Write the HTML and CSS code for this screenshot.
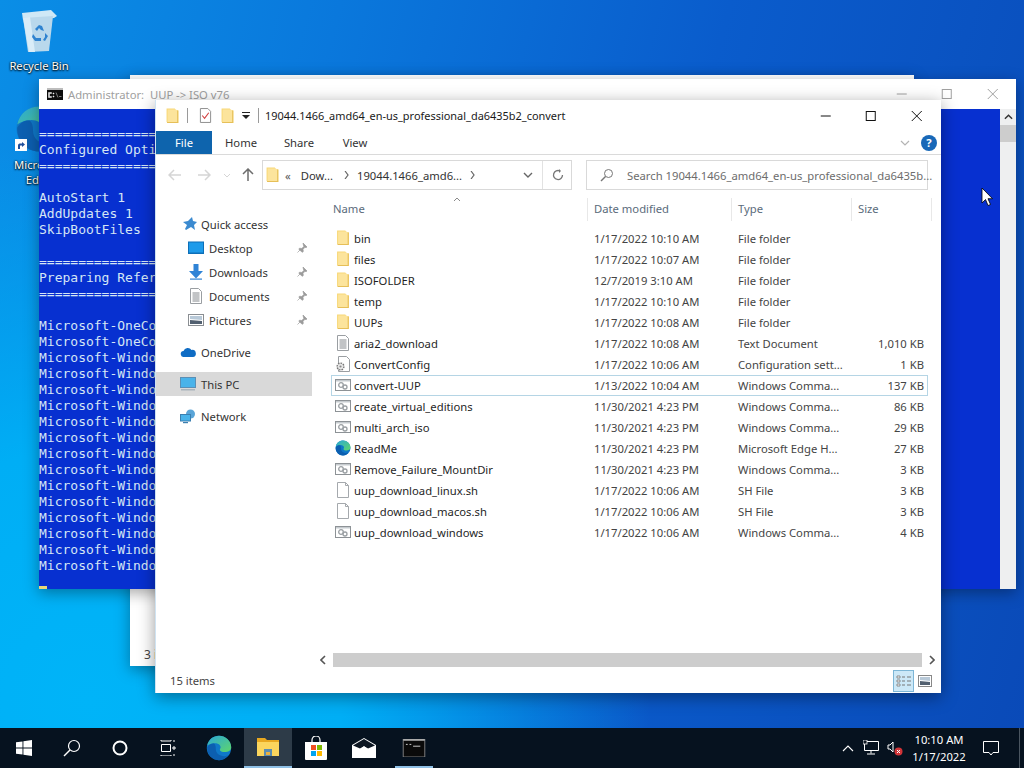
FILE: index.html
```html
<!DOCTYPE html>
<html lang="en">
<head>
<meta charset="utf-8">
<title>Windows 10 desktop</title>
<link rel="stylesheet" href="styles.css">
</head>
<body>
<svg class="defs" width="0" height="0" aria-hidden="true">
  <defs>
    <linearGradient id="edgeTop" x1="0" y1="0" x2="1" y2="1">
      <stop offset="0" stop-color="#2ba8d8"/>
      <stop offset="1" stop-color="#5ed66a"/>
    </linearGradient>
    <symbol id="folder" viewBox="1.5 .5 12.5 15.500">
      <path d="M2 1h8l1 1.500 2.500.5V15H3.500L2 14z" fill="#f8d878"/>
      <path d="M3 2h8l1.500 1V14H3z" fill="#fce49c"/>
      <path d="M12.800 3v11.600H2.500" fill="none" stroke="#e6bf58"/>
    </symbol>
    <symbol id="bat" viewBox="0 0 16 16">
      <rect x=".5" y="2.500" width="15" height="11" fill="#fff" stroke="#8d9296"/>
      <rect x="1" y="3" width="14" height="1.500" fill="#c6cbcf"/>
      <circle cx="6" cy="8" r="2.300" fill="none" stroke="#9a9fa3" stroke-width="1.300"/>
      <circle cx="10" cy="10" r="2" fill="none" stroke="#9a9fa3" stroke-width="1.300"/>
    </symbol>
    <symbol id="txt" viewBox="0 0 16 16">
      <path d="M2.500.5h8l3 3v12h-11z" fill="#fff" stroke="#9a9ea2"/>
      <path d="M4.500 5h7M4.500 7h7M4.500 9h7M4.500 11h7M4.500 13h7" stroke="#85898d"/>
    </symbol>
    <symbol id="blank" viewBox="0 0 16 16">
      <path d="M2.500.5h8l3 3v12h-11z" fill="#fff" stroke="#a5a9ad"/>
      <path d="M10.500.5v3h3" fill="none" stroke="#a5a9ad"/>
    </symbol>
    <symbol id="cfg" viewBox="0 0 16 16">
      <path d="M3.500.5h8l3 3v12h-11z" fill="#fff" stroke="#9a9ea2"/>
      <circle cx="5.500" cy="10.500" r="3.400" fill="#e8e8e8" stroke="#777" stroke-width="1.400" stroke-dasharray="1.600 1"/>
      <circle cx="5.500" cy="10.500" r="1.100" fill="#888"/>
    </symbol>
    <symbol id="edge" viewBox="0 0 32 32">
      <circle cx="16" cy="16" r="15" fill="#0f78c8"/>
      <path d="M1.500 13C3 5.500 9 1 16 1c8 0 15 6 15 14 0 4-4 6-8 6-3 0-6-1-6-3 0-1 1-1.500 1-3 0-3-3-5-7-5-4.500 0-8.500 2-9.500 3z" fill="url(#edgeTop)"/>
      <path d="M12 17c0 6 5 9 10 9 2 0 3.500-.5 5-1.500C24.500 28.500 20.500 31 16 31 8 31 1 24 1.500 15 4 11 8 10 10 10.500 11.500 12 12 14 12 17z" fill="#0c5fb0"/>
    </symbol>
    <symbol id="pin" viewBox="0 0 12 12">
      <path d="M7 1l4 4-1 .6-1-.3-2 2 .3 2.200-1 .8L2.800 7.200l.8-1 2.200.3 2-2-.3-1zM4.500 7.500L1.500 10.500" fill="#9b9b9b" stroke="#9b9b9b" stroke-width=".7"/>
    </symbol>
  </defs>
</svg>

<main class="desktop">
  <div class="desk-icon recycle">
    <svg class="desk-glyph" viewBox="0 0 40 44" width="40" height="44" aria-hidden="true">
      <path d="M3 4l29-3 6 6-3 2L4 11z" fill="#cfe8f6"/>
      <path d="M4 9l30-2-4 35-21 1z" fill="#b9d8ec"/>
      <path d="M4 9l6 34h6L11 8z" fill="#d9ecf8"/>
      <path d="M16 20l4-4 3 1 2 5-3-1-2-2-2 3zM14 25l3 4h5v3h-6l-3-4zM26 24l3 3-3 5-2-1 2-3z" fill="#2f83d0"/>
    </svg>
    <span class="desk-label">Recycle Bin</span>
  </div>
  <div class="desk-icon edge-short">
    <span class="edge-wrap">
      <svg viewBox="0 0 32 32" width="48" height="48" aria-hidden="true"><use href="#edge"/></svg>
      <svg class="shortcut" viewBox="0 0 12 12" width="12" height="12" aria-hidden="true">
        <rect width="12" height="12" fill="#fff"/>
        <path d="M3 10V6.500C3 5 4 4.500 5.500 4.500H7V3l3 2.500L7 8V6.500H5.500C5 6.500 5 7 5 7.500V10z" fill="#1f4f9c"/>
      </svg>
    </span>
    <span class="desk-label">Microsoft Edge</span>
  </div>

  <section class="win back-win">
    <div class="back-spacer"></div>
    <div class="back-status">3 items</div>
  </section>

  <section class="win console">
    <header class="console-title">
      <svg class="console-icon" viewBox="0 0 16 12" width="16" height="12" aria-hidden="true">
        <rect width="16" height="12" fill="#0c0c0c"/>
        <rect width="16" height="2" fill="#bdbdbd"/>
        <path d="M2.500 4.500h2v1h-2v3h2v1h-3v-5zM6 5h1v1H6zM6 8h1v1H6zM9 4.500l2 5M12 8.500h2.500" stroke="#eee" fill="#eee" stroke-width=".5"/>
      </svg>
      <span class="console-name">Administrator:  UUP -&gt; ISO v76</span>
      <span class="caption-group dim">
        <svg viewBox="0 0 10 10" width="10" height="10" aria-hidden="true"><path d="M0 5h10" stroke="currentColor"/></svg>
        <svg viewBox="0 0 10 10" width="10" height="10" aria-hidden="true"><rect x=".5" y=".5" width="9" height="9" fill="none" stroke="currentColor"/></svg>
        <svg viewBox="0 0 10 10" width="10" height="10" aria-hidden="true"><path d="M0 0l10 10M10 0L0 10" stroke="currentColor"/></svg>
      </span>
    </header>
    <div class="console-body">
      <pre class="console-text">
===============
Configured Opti
===============

AutoStart 1
AddUpdates 1
SkipBootFiles

===============
Preparing Refer
===============

Microsoft-OneCo
Microsoft-OneCo
Microsoft-Windo
Microsoft-Windo
Microsoft-Windo
Microsoft-Windo
Microsoft-Windo
Microsoft-Windo
Microsoft-Windo
Microsoft-Windo
Microsoft-Windo
Microsoft-Windo
Microsoft-Windo
Microsoft-Windo
Microsoft-Windo
Microsoft-Windo</pre>
      <span class="cursor"></span>
      <div class="console-scroll">
        <svg viewBox="0 0 10 6" width="9" height="6" aria-hidden="true"><path d="M1 5l4-4 4 4" fill="none" stroke="#333" stroke-width="1.600"/></svg>
        <span class="console-thumb"></span>
      </div>
    </div>
  </section>

  <section class="win explorer">
    <header class="title-row">
      <svg class="qa-folder" width="13" height="16" aria-hidden="true"><use href="#folder"/></svg>
      <span class="qa-sep"></span>
      <svg class="qa-check" viewBox="0 0 14 16" width="13" height="15" aria-hidden="true">
        <path d="M1.500.5h8l3 3v12h-11z" fill="#fff" stroke="#888"/>
        <path d="M3.500 8l2.500 3 4.500-6" fill="none" stroke="#d24040" stroke-width="1.200"/>
      </svg>
      <svg class="qa-folder2" width="13" height="16" aria-hidden="true"><use href="#folder"/></svg>
      <svg class="qa-drop" viewBox="0 0 8 7" width="8" height="7" aria-hidden="true"><path d="M0 0h8v1H0zM0 3h8L4 7z" fill="#222"/></svg>
      <span class="qa-sep second"></span>
      <span class="win-title">19044.1466_amd64_en-us_professional_da6435b2_convert</span>
      <span class="caption-group main">
        <svg viewBox="0 0 10 10" width="10" height="10" aria-hidden="true"><path d="M0 5h10" stroke="currentColor"/></svg>
        <svg viewBox="0 0 10 10" width="10" height="10" aria-hidden="true"><rect x=".5" y=".5" width="9" height="9" fill="none" stroke="currentColor"/></svg>
        <svg viewBox="0 0 10 10" width="10" height="10" aria-hidden="true"><path d="M0 0l10 10M10 0L0 10" stroke="currentColor"/></svg>
      </span>
    </header>

    <nav class="ribbon">
      <span class="tab file-tab">File</span>
      <span class="tab home-tab">Home</span>
      <span class="tab share-tab">Share</span>
      <span class="tab view-tab">View</span>
      <svg class="ribbon-chev" viewBox="0 0 10 6" width="10" height="6" aria-hidden="true"><path d="M1 1l4 4 4-4" fill="none" stroke="#b4b4b4" stroke-width="1.200"/></svg>
      <span class="help">?</span>
    </nav>

    <div class="nav-row">
      <svg class="nav-arrow back" viewBox="0 0 14 12" width="14" height="12" aria-hidden="true"><path d="M6 1L1 6l5 5M1 6h12" fill="none" stroke="#d5d5d5" stroke-width="1.500"/></svg>
      <svg class="nav-arrow fwd" viewBox="0 0 14 12" width="14" height="12" aria-hidden="true"><path d="M8 1l5 5-5 5M13 6H1" fill="none" stroke="#d5d5d5" stroke-width="1.500"/></svg>
      <svg class="nav-arrow recent" viewBox="0 0 8 5" width="8" height="5" aria-hidden="true"><path d="M1 1l3 3 3-3" fill="none" stroke="#d5d5d5"/></svg>
      <svg class="nav-arrow up" viewBox="0 0 12 14" width="12" height="14" aria-hidden="true"><path d="M1 6l5-5 5 5M6 1v12" fill="none" stroke="#6d6d6d" stroke-width="1.500"/></svg>
      <div class="address">
        <svg class="addr-folder" width="13" height="16" aria-hidden="true"><use href="#folder"/></svg>
        <span class="addr-quote">«</span>
        <span class="addr-dow">Dow...</span>
        <svg class="crumb" viewBox="0 0 5 8" width="5" height="8" aria-hidden="true"><path d="M1 0l3 4-3 4" fill="none" stroke="#666" stroke-width="1.200"/></svg>
        <span class="addr-path">19044.1466_amd6...</span>
        <svg class="crumb second" viewBox="0 0 5 8" width="5" height="8" aria-hidden="true"><path d="M1 0l3 4-3 4" fill="none" stroke="#666" stroke-width="1.200"/></svg>
        <svg class="addr-drop" viewBox="0 0 10 6" width="10" height="6" aria-hidden="true"><path d="M1 1l4 4 4-4" fill="none" stroke="#666" stroke-width="1.400"/></svg>
        <span class="addr-sep"></span>
        <svg class="refresh" viewBox="0 0 12 12" width="12" height="12" aria-hidden="true"><path d="M10.500 6A4.500 4.500 0 1 1 8 2" fill="none" stroke="#777" stroke-width="1.300"/><path d="M7 0l2 2-2 2z" fill="#777"/></svg>
      </div>
      <div class="search">
        <svg class="search-icon" viewBox="0 0 14 14" width="14" height="14" aria-hidden="true"><circle cx="8.500" cy="5.500" r="4" fill="none" stroke="#777"/><path d="M5.500 8.500L1 13" stroke="#777" stroke-width="1.500"/></svg>
        <span class="search-text">Search 19044.1466_amd64_en-us_professional_da6435b...</span>
      </div>
    </div>

    <div class="body-row">
      <aside class="side">
        <div class="side-item top"><svg viewBox="0 0 16 16" width="16" height="16" aria-hidden="true"><path d="M10 1l1 4 4 1-3 3 1 5-4-3-5 3-1-1 2-4-4-3 5-1z" fill="#3b8ad0"/></svg><span>Quick access</span></div>
        <div class="side-item sub"><svg viewBox="0 0 16 14" width="16" height="14" aria-hidden="true"><rect x=".5" y="1" width="15" height="11" fill="#1e9bea" stroke="#0d6fb8"/><rect y="12" width="16" height="1" fill="#0d6fb8"/></svg><span>Desktop</span><svg class="pin" width="12" height="12" aria-hidden="true"><use href="#pin"/></svg></div>
        <div class="side-item sub"><svg viewBox="0 0 16 16" width="16" height="16" aria-hidden="true"><path d="M5.500 0h5v7H15l-7 7.500L1 7h4.500z" fill="#2f83d6"/><rect x="2" y="14.500" width="12" height="1.200" fill="#2f83d6"/></svg><span>Downloads</span><svg class="pin" width="12" height="12" aria-hidden="true"><use href="#pin"/></svg></div>
        <div class="side-item sub"><svg viewBox="0 0 16 16" width="16" height="16" aria-hidden="true"><use href="#txt"/></svg><span>Documents</span><svg class="pin" width="12" height="12" aria-hidden="true"><use href="#pin"/></svg></div>
        <div class="side-item sub"><svg viewBox="0 0 16 14" width="16" height="14" aria-hidden="true"><rect x=".5" y="1.500" width="15" height="11" fill="#fff" stroke="#8a8e92"/><path d="M2 3h12v4L2 6z" fill="#b8c9d8"/><path d="M2 7l12 1v3H2z" fill="#526070"/></svg><span>Pictures</span><svg class="pin" width="12" height="12" aria-hidden="true"><use href="#pin"/></svg></div>
        <div class="side-item group"><svg viewBox="0 0 16 10" width="16" height="10" aria-hidden="true"><path d="M4 10a3 3 0 0 1-.5-6A4.500 4.500 0 0 1 11.500 3 3.500 3.500 0 0 1 13 10z" fill="#0f6cc4"/></svg><span>OneDrive</span></div>
        <div class="side-item group current"><svg viewBox="0 0 16 14" width="16" height="14" aria-hidden="true"><rect x=".5" y=".5" width="15" height="10" fill="#49b3ea" stroke="#5b8fb5"/><rect x="1" y="12" width="14" height="1.500" fill="#a9b4bc"/></svg><span>This PC</span></div>
        <div class="side-item group"><svg viewBox="0 0 16 15" width="16" height="15" aria-hidden="true"><circle cx="10.500" cy="5" r="4.500" fill="#5aa5d8"/><rect x=".5" y="5.500" width="10" height="6.500" fill="#49b3ea" stroke="#3b7fb0"/><rect x="3" y="13" width="5" height="1.200" fill="#3b7fb0"/></svg><span>Network</span></div>
      </aside>

      <div class="content">
        <div class="sort-mark"><svg viewBox="0 0 8 5" width="8" height="5" aria-hidden="true"><path d="M1 4l3-3 3 3" fill="none" stroke="#8a8a8a"/></svg></div>
        <div class="columns">
          <span class="col">Name</span>
          <span class="col">Date modified</span>
          <span class="col">Type</span>
          <span class="col">Size</span>
        </div>
        <div class="rows">
          <div class="row"><svg width="16" height="16" aria-hidden="true"><use href="#folder"/></svg><span class="fname">bin</span><span>1/17/2022 10:10 AM</span><span>File folder</span><span class="size"></span></div>
          <div class="row"><svg width="16" height="16" aria-hidden="true"><use href="#folder"/></svg><span class="fname">files</span><span>1/17/2022 10:07 AM</span><span>File folder</span><span class="size"></span></div>
          <div class="row"><svg width="16" height="16" aria-hidden="true"><use href="#folder"/></svg><span class="fname">ISOFOLDER</span><span>12/7/2019 3:10 AM</span><span>File folder</span><span class="size"></span></div>
          <div class="row"><svg width="16" height="16" aria-hidden="true"><use href="#folder"/></svg><span class="fname">temp</span><span>1/17/2022 10:10 AM</span><span>File folder</span><span class="size"></span></div>
          <div class="row"><svg width="16" height="16" aria-hidden="true"><use href="#folder"/></svg><span class="fname">UUPs</span><span>1/17/2022 10:08 AM</span><span>File folder</span><span class="size"></span></div>
          <div class="row"><svg width="16" height="16" aria-hidden="true"><use href="#txt"/></svg><span class="fname">aria2_download</span><span>1/17/2022 10:08 AM</span><span>Text Document</span><span class="size">1,010 KB</span></div>
          <div class="row"><svg width="16" height="16" aria-hidden="true"><use href="#cfg"/></svg><span class="fname">ConvertConfig</span><span>1/17/2022 10:06 AM</span><span>Configuration sett...</span><span class="size">1 KB</span></div>
          <div class="row focused"><svg width="16" height="16" aria-hidden="true"><use href="#bat"/></svg><span class="fname">convert-UUP</span><span>1/13/2022 10:04 AM</span><span>Windows Comma...</span><span class="size">137 KB</span></div>
          <div class="row"><svg width="16" height="16" aria-hidden="true"><use href="#bat"/></svg><span class="fname">create_virtual_editions</span><span>11/30/2021 4:23 PM</span><span>Windows Comma...</span><span class="size">86 KB</span></div>
          <div class="row"><svg width="16" height="16" aria-hidden="true"><use href="#bat"/></svg><span class="fname">multi_arch_iso</span><span>11/30/2021 4:23 PM</span><span>Windows Comma...</span><span class="size">29 KB</span></div>
          <div class="row"><svg viewBox="0 0 32 32" width="16" height="16" aria-hidden="true"><use href="#edge"/></svg><span class="fname">ReadMe</span><span>11/30/2021 4:23 PM</span><span>Microsoft Edge H...</span><span class="size">27 KB</span></div>
          <div class="row"><svg width="16" height="16" aria-hidden="true"><use href="#bat"/></svg><span class="fname">Remove_Failure_MountDir</span><span>11/30/2021 4:23 PM</span><span>Windows Comma...</span><span class="size">3 KB</span></div>
          <div class="row"><svg width="16" height="16" aria-hidden="true"><use href="#blank"/></svg><span class="fname">uup_download_linux.sh</span><span>1/17/2022 10:06 AM</span><span>SH File</span><span class="size">3 KB</span></div>
          <div class="row"><svg width="16" height="16" aria-hidden="true"><use href="#blank"/></svg><span class="fname">uup_download_macos.sh</span><span>1/17/2022 10:06 AM</span><span>SH File</span><span class="size">3 KB</span></div>
          <div class="row"><svg width="16" height="16" aria-hidden="true"><use href="#bat"/></svg><span class="fname">uup_download_windows</span><span>1/17/2022 10:06 AM</span><span>Windows Comma...</span><span class="size">4 KB</span></div>
        </div>
        <div class="hscroll">
          <svg viewBox="0 0 6 10" width="6" height="10" aria-hidden="true"><path d="M5 1L1 5l4 4" fill="none" stroke="#555" stroke-width="1.600"/></svg>
          <span class="hthumb"></span>
          <svg viewBox="0 0 6 10" width="6" height="10" aria-hidden="true"><path d="M1 1l4 4-4 4" fill="none" stroke="#555" stroke-width="1.600"/></svg>
        </div>
      </div>
    </div>

    <footer class="status">
      <span class="count">15 items</span>
      <span class="view-btn active">
        <svg viewBox="0 0 16 12" width="16" height="12" aria-hidden="true"><path d="M1 1h3v2H1zM1 5h3v2H1zM1 9h3v2H1z" fill="#fff" stroke="#777" stroke-width=".8"/><path d="M6 2h3M11 2h4M6 6h3M11 6h4M6 10h3M11 10h4" stroke="#777"/></svg>
      </span>
      <span class="view-btn large">
        <svg viewBox="0 0 14 12" width="14" height="12" aria-hidden="true"><rect x=".5" y=".5" width="13" height="11" fill="#fff" stroke="#888"/><path d="M2 2h10v4L2 5z" fill="#b8c9d8"/><path d="M2 6l10 1v3H2z" fill="#526070"/></svg>
      </span>
    </footer>
  </section>

  <svg class="pointer" viewBox="0 0 12 20" width="12" height="20" aria-hidden="true"><path d="M1 1v15l3.500-3.500 2.500 6 2.500-1-2.500-5.800H11.500z" fill="#fff" stroke="#000" stroke-width=".8"/></svg>
</main>

<footer class="taskbar">
  <span class="tb start"><svg viewBox="0 0 16 16" width="16" height="16" aria-hidden="true"><path d="M0 2.300l6.500-.9v6.200H0zM7.400 1.300L16 0v7.600H7.400zM0 8.400h6.500v6.200L0 13.700zM7.400 8.400H16V16l-8.600-1.300z" fill="#fff"/></svg></span>
  <span class="tb"><svg viewBox="0 0 18 18" width="18" height="18" aria-hidden="true"><circle cx="11" cy="7" r="5.500" fill="none" stroke="#fff" stroke-width="1.200"/><path d="M7 11l-6 6" stroke="#fff" stroke-width="1.400"/></svg></span>
  <span class="tb"><svg viewBox="0 0 16 16" width="16" height="16" aria-hidden="true"><circle cx="8" cy="8" r="6.500" fill="none" stroke="#fff" stroke-width="2"/></svg></span>
  <span class="tb"><svg viewBox="0 0 16 16" width="16" height="16" aria-hidden="true"><path d="M1 0v1h10V0M1 15v1h10v-1M1.500 4.500h9v7h-9zM13 1h2M13 7h2v2h-2zM13 15h2" fill="none" stroke="#fff"/></svg></span>
  <span class="tb edge-tb"><svg viewBox="0 0 32 32" width="26" height="26" aria-hidden="true"><use href="#edge"/></svg></span>
  <span class="tb files-tb"><svg viewBox="0 0 24 20" width="24" height="20" aria-hidden="true"><path d="M1 1h8l2 2h12v15H1z" fill="#e8a820"/><path d="M1 5h22v14H1z" fill="#fbd55d"/><rect x="8" y="12" width="8" height="7" fill="#5b8cb0"/><rect x="10" y="15" width="4" height="3" fill="#e8b040"/></svg></span>
  <span class="tb"><svg viewBox="0 0 24 24" width="24" height="24" aria-hidden="true"><path d="M8 6V4a4 4 0 0 1 8 0v2" fill="none" stroke="#fff" stroke-width="1.200"/><path d="M1 6h22v17a1 1 0 0 1-1 1H2a1 1 0 0 1-1-1z" fill="#fff"/><rect x="7" y="9" width="5" height="5" fill="#f25022"/><rect x="13" y="9" width="5" height="5" fill="#7fba00"/><rect x="7" y="15" width="5" height="5" fill="#00a4ef"/><rect x="13" y="15" width="5" height="5" fill="#ffb900"/></svg></span>
  <span class="tb"><svg viewBox="0 0 24 20" width="24" height="20" aria-hidden="true"><path d="M0 7l12-7 12 7v13H0z" fill="#fff"/><path d="M1 7.500l11-6.500 11 6.500-7 3-4-2-4 2z" fill="#0c1622"/><path d="M12 8l4 3-4 2-4-2z" fill="#fff"/></svg></span>
  <span class="tb cmd-tb"><svg viewBox="0 0 24 20" width="24" height="18" aria-hidden="true"><rect width="24" height="20" fill="#0a0a0a" stroke="#888"/><rect width="24" height="2" fill="#aaa"/><path d="M3 6h2M7 6h2M11 8h8" stroke="#ddd"/></svg></span>
  <div class="tray">
    <svg class="tray-chev" viewBox="0 0 12 7" width="12" height="7" aria-hidden="true"><path d="M1 6l5-5 5 5" fill="none" stroke="#fff" stroke-width="1.100"/></svg>
    <svg class="tray-net" viewBox="0 0 16 16" width="16" height="16" aria-hidden="true"><path d="M1.500 1.500h14v9H1.500zM8 10.500v3M4 14h8" fill="none" stroke="#fff"/><rect x="0" y="0" width="4" height="4" fill="#0c1622" stroke="#fff" stroke-width=".8"/></svg>
    <svg class="tray-vol" viewBox="0 0 16 16" width="16" height="16" aria-hidden="true"><path d="M1 5h2l3-3v10L3 9H1z" fill="none" stroke="#fff"/><circle cx="11.500" cy="11.500" r="4" fill="#d13438"/><path d="M10 10l3 3M13 10l-3 3" stroke="#fff"/></svg>
    <div class="clock"><span>10:10 AM</span><span>1/17/2022</span></div>
    <svg class="tray-note" viewBox="0 0 16 16" width="16" height="16" aria-hidden="true"><path d="M.5 1.500h15v11H10L8 15l-2-2.500H.5z" fill="none" stroke="#fff"/></svg>
    <span class="show-desktop"></span>
  </div>
</footer>
</body>
</html>
```
FILE: styles.css
```css
* { box-sizing: border-box; }
html, body { margin: 0; height: 100%; }
body {
  width: 1024px;
  height: 768px;
  overflow: hidden;
  display: flex;
  flex-direction: column;
  font-family: "Noto Sans", "Open Sans", sans-serif;
  font-size: 11.25px;
  color: #333;
  background: #0a5fd0;
}
.defs { position: absolute; }

.desktop {
  position: relative;
  flex: 1;
  background:
    radial-gradient(560px 560px at 90px 700px, #00b4f8 0%, #00aef5 45%, rgba(0,160,240,0) 100%),
    linear-gradient(105deg, #0a8ee6 0%, #0a78dc 28%, #0a5ccc 60%, #0a4ab8 100%);
}

.desk-icon {
  position: absolute;
  display: flex;
  flex-direction: column;
  align-items: center;
  width: 76px;
  color: #fff;
  text-shadow: 0 1px 2px #000, 0 0 2px #000;
}
.recycle { left: 1px; top: 9px; }
.edge-short { left: 1px; top: 105px; }
.desk-label { margin-top: 5px; line-height: 15px; text-align: center; }
.edge-wrap { position: relative; height: 48px; display: block; }
.shortcut { position: absolute; left: 0; bottom: 2px; }
.edge-short .desk-label { width: 60px; margin-top: 4px; }

.win { position: absolute; display: flex; flex-direction: column; background: #fff; }
.back-win {
  left: 130px; top: 75px; width: 784px; height: 591px;
  box-shadow: 0 4px 14px rgba(0,0,0,.35);
}
.back-spacer { flex: 1; }
.back-status { padding-left: 14px; height: 22px; line-height: 22px; color: #444; font-size: 12px; }

.console {
  left: 39px; top: 79px; width: 977px; height: 510px;
  box-shadow: 0 4px 14px rgba(0,0,0,.35);
}
.console-title {
  height: 30px;
  display: flex;
  align-items: center;
  padding-left: 8px;
  flex: none;
  background: #fff;
}
.console-icon { margin-right: 5px; }
.console-name { color: #a0a0a0; white-space: pre; }
.caption-group {
  margin-left: auto;
  display: flex;
  align-items: center;
  color: #111;
}
.caption-group svg { width: 45.5px; height: 10px; }
.caption-group.dim { color: #a0a0a0; margin-right: 1px; }
.caption-group.main { margin-right: 2px; }
.console-body { position: relative; flex: 1; background: #0730d0; display: flex; }
.console-text {
  flex: 1;
  margin: 0;
  padding-top: 17px;
  color: #d5e6f5;
  font: 13px/16px "DejaVu Sans Mono", "Liberation Mono", monospace;
}
.cursor { position: absolute; left: 0; bottom: 0; width: 8px; height: 3px; background: #e8d878; }
.console-scroll {
  width: 16px;
  background: #eeeff0;
  display: flex;
  flex-direction: column;
  align-items: center;
  padding-top: 5px;
  gap: 5px;
}
.console-thumb { width: 16px; height: 17px; background: #cdcdcd; }

.explorer {
  left: 155px; top: 100px; width: 786px; height: 593px;
  box-shadow: 0 4px 16px rgba(0,0,0,.4);
  border-left: 1px solid #cfe3f2;
}

.title-row {
  height: 31px;
  flex: none;
  display: flex;
  align-items: center;
  padding-left: 10px;
  color: #1a1a1a;
}
.qa-sep { width: 1px; height: 15px; background: #9a9a9a; margin: 0 11px 0 8px; }
.qa-folder2 { margin-left: 9px; }
.qa-drop { margin-left: 8px; }
.qa-sep.second { margin: 0 6px 0 8px; }
.win-title { font-size: 10.95px; }

.ribbon {
  height: 24px;
  flex: none;
  display: flex;
  align-items: center;
  border-bottom: 1px solid #dadada;
  position: relative;
}
.tab { color: #333; text-align: center; }
.file-tab {
  width: 56px;
  height: 23px;
  background: #0e64ad;
  color: #fff;
  line-height: 23px;
}
.home-tab, .share-tab { width: 58px; }
.view-tab { width: 54px; }
.ribbon-chev { margin-left: auto; margin-right: 11px; }
.help {
  width: 16px; height: 16px; border-radius: 50%;
  background: #1868b8; color: #fff; font-weight: 700;
  text-align: center; line-height: 16px;
  margin-right: 4px;
}

.nav-row {
  height: 40px;
  flex: none;
  display: flex;
  align-items: center;
  padding-left: 12px;
}
.nav-arrow { flex: none; }
.fwd { margin-left: 15px; }
.recent { margin-left: 12px; }
.up { margin-left: 11px; }
.address {
  margin-left: 8px;
  width: 310px;
  height: 30px;
  border: 1px solid #d9d9d9;
  display: flex;
  align-items: center;
  padding-left: 3px;
}
.addr-quote { margin-left: 6px; color: #555; }
.addr-dow { margin-left: 10px; }
.crumb { margin-left: 11px; }
.addr-path { margin-left: 8px; }
.crumb.second { margin-left: 8px; }
.addr-drop { margin-left: auto; }
.addr-sep { width: 1px; height: 28px; background: #e2e2e2; margin-left: 9px; }
.refresh { margin-left: 9px; margin-right: 7px; }
.search {
  margin-left: 14px;
  width: 342px;
  height: 30px;
  border: 1px solid #d9d9d9;
  display: flex;
  align-items: center;
  padding-left: 13px;
  color: #6d6d6d;
  white-space: nowrap;
}
.search-icon { flex: none; }
.search-text { margin-left: 13px; }

.body-row { flex: 1; display: flex; min-height: 0; }
.side { width: 156px; flex: none; padding-top: 17px; }
.side-item {
  height: 24px;
  display: flex;
  align-items: center;
  gap: 5px;
  padding-left: 24px;
  color: #333;
}
.side-item > svg:first-child { flex: none; }
.side-item.top { padding-left: 26px; gap: 3px; }
.side-item.sub { padding-left: 32px; }
.side-item.group { margin-top: 8px; }
.side-item.current { background: #d9d9d9; }
.pin { margin-left: auto; margin-right: 4px; }

.content { flex: 1; min-width: 0; display: flex; flex-direction: column; position: relative; }
.sort-mark { position: absolute; left: 141px; top: 2px; line-height: 0; }
.columns {
  height: 25px;
  margin-top: 3px;
  display: grid;
  grid-template-columns: 276px 144px 120px 80px;
  color: #5a6b7b;
}
.col {
  padding-left: 21px;
  border-right: 1px solid #e8e8e8;
  line-height: 22px;
  height: 23px;
}
.col + .col { padding-left: 6px; }
.rows { padding: 5px 0 0 19px; flex: 1; }
.row {
  width: 597px;
  height: 21px;
  display: grid;
  grid-template-columns: 19px 240px 144px 120px 66px;
  align-items: center;
  padding: 0 0 1px 4px;
  color: #444;
  white-space: nowrap;
}
.row > svg { display: block; }
.fname { color: #1f1f1f; }
.size { text-align: right; }
.row.focused { outline: 1px solid #b5d5e5; outline-offset: -1px; }
.hscroll {
  height: 16px;
  margin: 0 3px 0 5px;
  display: flex;
  align-items: center;
  gap: 7px;
  padding: 0 3px;
}
.hthumb { flex: 1; height: 14px; background: #cdcdcd; }

.status {
  height: 25px;
  flex: none;
  display: flex;
  align-items: center;
  padding-left: 14px;
  color: #444;
}
.count { margin-right: auto; }
.view-btn {
  height: 22px;
  display: flex;
  align-items: center;
  justify-content: center;
}
.view-btn.large { width: 16px; margin-right: 8px; }
.view-btn.active { width: 21px; background: #cce8f7; border: 1px solid #7db6d6; margin-right: 3px; }

.pointer { position: absolute; left: 981px; top: 187px; }

.taskbar {
  height: 40px;
  flex: none;
  background: #06121f;
  display: flex;
  align-items: stretch;
  color: #fff;
}
.tb { width: 48px; display: flex; align-items: center; justify-content: center; position: relative; }
.edge-tb { margin-left: 3px; margin-right: 1px; }
.files-tb { background: #2d3b48; border-bottom: 2px solid #8fc0e6; }
.cmd-tb { margin-left: 2px; }
.cmd-tb::after {
  content: "";
  position: absolute;
  left: 5px; right: 5px; bottom: 0;
  height: 2px;
  background: #8fc0e6;
}
.tray { margin-left: auto; display: flex; align-items: center; }
.tray-net { margin-left: 9px; }
.tray-vol { margin-left: 8px; }
.clock {
  width: 78px;
  margin-left: -3px;
  display: flex;
  flex-direction: column;
  align-items: center;
  line-height: 17px;
}
.tray-note { margin-left: 5px; }
.show-desktop { width: 1px; height: 40px; background: #4a5560; margin-left: 20px; margin-right: 4px; }
```
